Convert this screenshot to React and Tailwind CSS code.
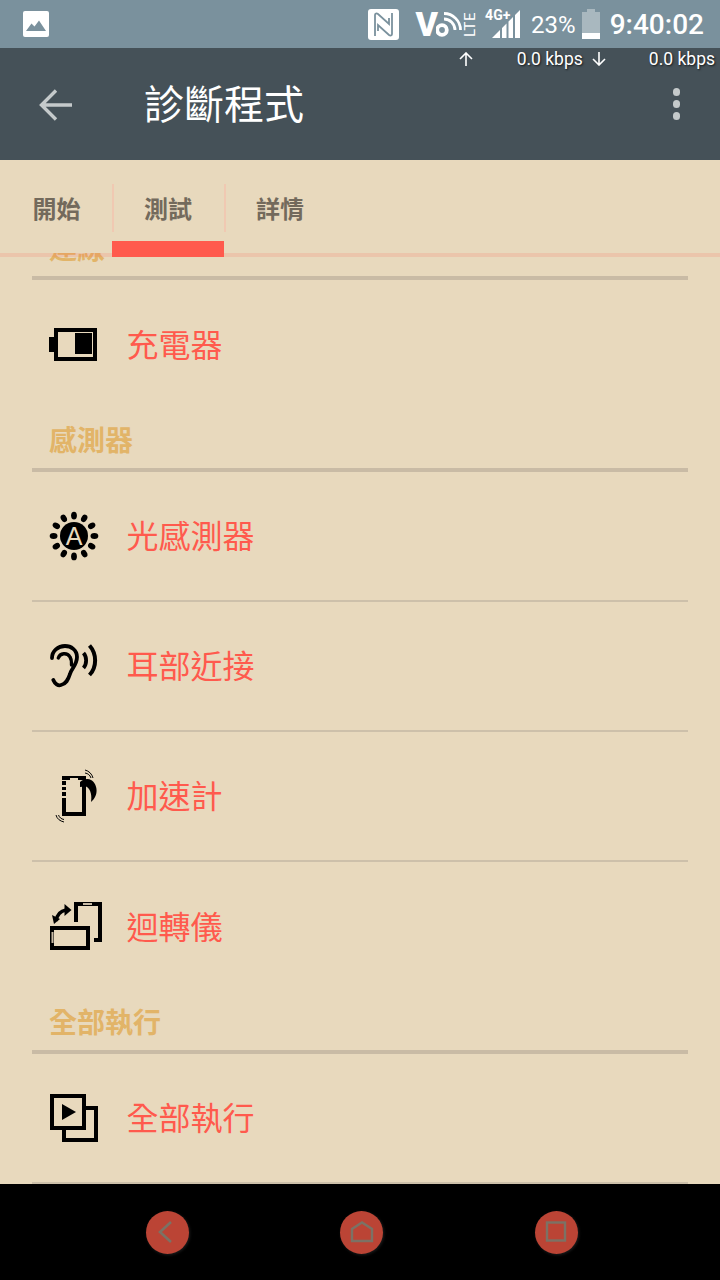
const CJK = { fontFamily: '"Noto Sans CJK TC", "Noto Sans", sans-serif' };

function Row({ icon, label, last }) {
  return (
    <div className={`mx-8 h-[130px] flex items-center pl-[18px] ${last ? "" : "border-b-2 border-[#cdc0aa]"}`}>
      <div className="w-[48px] h-[48px] shrink-0">{icon}</div>
      <span className="ml-[28.5px] -mt-[4px] text-[32px] leading-none text-[#ff5a4d]" style={CJK}>{label}</span>
    </div>
  );
}

function Header({ label }) {
  return (
    <div className="mx-8 h-[62px] pl-[17px] border-b-4 border-[#c9bba5] flex items-start">
      <span className="mt-[13px] text-[28px] leading-[32px] font-bold text-[#e2b468]" style={CJK}>{label}</span>
    </div>
  );
}

const BatteryIcon = (
  <svg viewBox="0 0 48 48" className="w-full h-full overflow-visible">
    <rect x="-1" y="16" width="6" height="15" fill="#000" />
    <rect x="6" y="9" width="39" height="29" fill="none" stroke="#000" strokeWidth="4" />
    <rect x="25" y="12" width="17" height="21" fill="#000" />
  </svg>
);

const rays = [0, 30, 60, 90, 120, 150, 180, 210, 240, 270, 300, 330];
const SunIcon = (
  <svg viewBox="0 0 48 48" className="w-full h-full overflow-visible">
    <circle cx="24" cy="24" r="14" fill="#000" />
    {rays.map((r) => (
      <ellipse key={r} cx="24" cy="3.6" rx="2.9" ry="3.9" fill="#000" transform={`rotate(${r} 24 24)`} />
    ))}
    <text x="24" y="33" textAnchor="middle" fontSize="25" fill="#e8d9bd" style={{ fontFamily: '"Liberation Sans", sans-serif' }}>A</text>
  </svg>
);

const EarIcon = (
  <svg viewBox="0 0 48 48" className="w-full h-full overflow-visible" fill="none" stroke="#000" strokeLinecap="round">
    <path d="M3.3 38 C5 42 8 44 11 43 C16 42 18 38 20 32 C21 27 27 23 27 15 C27 8 21 4 15 4 C8 4 2 9 2 16" strokeWidth="3.8" />
    <path d="M8.3 16 C10 11 17 10 20 15 C22 18 21.5 21 21.5 23" strokeWidth="3.4" />
    <path d="M33.5 11 C37 15 37 22 33.5 26" strokeWidth="3.8" strokeLinecap="butt" />
    <path d="M39.5 3.5 C47 12 47 25 39.5 33" strokeWidth="4" strokeLinecap="butt" />
  </svg>
);

const AccelIcon = (
  <svg viewBox="0 0 48 48" className="w-full h-full overflow-visible" fill="none">
    <path d="M12 6 H36" stroke="#000" strokeWidth="4" />
    <path d="M34 14 V42 H14 V29" stroke="#000" strokeWidth="4" />
    <rect x="20" y="6" width="8" height="2" fill="#e8d9bd" />
    <rect x="12" y="9" width="4" height="4" fill="#000" />
    <rect x="12" y="15" width="4" height="3" fill="#000" />
    <rect x="12" y="20" width="4" height="4" fill="#000" />
    <rect x="12" y="26" width="4" height="3" fill="#000" />
    <path d="M30 10 C33 7 38 6 41 8 C48 12 49 24 41 30 C42 24 41 18 37 15 C35 14 32 15 30 15 Z" fill="#000" />
    <path d="M35 -2 C39 -1 42 2 43 6 M35 1 C38 1.5 40 3 41 6" stroke="#000" strokeWidth="1" />
    <path d="M6 43 C7 47 10 49 14 50 M8.5 43 C9.5 45.5 11 47 14 47.5" stroke="#000" strokeWidth="1" />
  </svg>
);

const GyroIcon = (
  <svg viewBox="0 0 48 48" className="w-full h-full overflow-visible -translate-y-px" fill="none">
    <rect x="2" y="26" width="36" height="20" stroke="#000" strokeWidth="4" />
    <path d="M26 20 V2 H50 V38 H44" stroke="#000" strokeWidth="4" />
    <rect x="33" y="1" width="9" height="2" fill="#c9bba5" />
    <rect x="1.5" y="30" width="2" height="11" fill="#c9bba5" />
    <path d="M6 19 C7 13 10 9 16 8" stroke="#000" strokeWidth="3.4" />
    <path d="M14.5 2 L21.5 8 L14.5 14 Z" fill="#000" />
    <path d="M2 13 L10 17 L4 22 Z" fill="#000" />
  </svg>
);

const RunIcon = (
  <svg viewBox="0 0 48 48" className="w-full h-full overflow-visible" fill="none">
    <rect x="2" y="2" width="32" height="32" stroke="#000" strokeWidth="4" />
    <path d="M36 14 H46 V46 H14 V36" stroke="#000" strokeWidth="4" />
    <path d="M12 10 L26 18 L12 26 Z" fill="#000" />
  </svg>
);

function Tab({ label, active, border }) {
  return (
    <div className="relative w-[112px] h-full flex flex-col items-center">
      <div className={`w-full h-[48px] mt-6 flex items-center justify-center ${border ? "border-l-2 border-[#f0c9b2] pr-[2px]" : "pl-px"}`}>
        <span className="text-[24px] leading-none font-bold text-[#736a5c]" style={CJK}>{label}</span>
      </div>
      {active && <div className="absolute left-0 right-0 -bottom-1 h-4 bg-[#ff5a4d]" />}
    </div>
  );
}

function NavButton({ children }) {
  return (
    <div className="w-[43px] h-[43px] rounded-full bg-[#bb4435] flex items-center justify-center shadow-[1px_1px_3px_rgba(60,60,60,0.5)]">
      {children}
    </div>
  );
}

export default function App() {
  return (
    <div className="w-[720px] h-[1280px] flex flex-col overflow-hidden bg-[#e8d9bd]" style={{ fontFamily: 'Roboto, sans-serif' }}>
      {/* status bar */}
      <div className="h-12 shrink-0 bg-[#7a919d] flex items-center pl-[23px] pr-4 text-white">
        <svg viewBox="0 0 26 26" className="w-[26px] h-[26px]">
          <rect width="26" height="26" rx="2" fill="#fff" />
          <path d="M3 20 L8.5 12.5 L11.5 15.5 L16 9.5 L23 20 Z" fill="#7a919d" />
        </svg>
        <div className="flex-1" />
        <svg viewBox="0 0 31 31" className="w-[31px] h-[31px]">
          <rect width="31" height="31" rx="3" fill="#fff" />
          <path d="M7 27 V6 C7 4.5 8.5 4 10 5 L21 15 V9 M24 4 V25 C24 26.5 22.5 27 21 26 L10 16 V22" fill="none" stroke="#7a919d" strokeWidth="1.8" />
        </svg>
        <span className="ml-[17px] text-[34px] leading-none font-black">V</span>
        <svg viewBox="0 0 26 30" className="w-[26px] h-[30px] -ml-[2px] mt-[2px]">
          <circle cx="6" cy="20" r="4.8" fill="none" stroke="#fff" strokeWidth="3.8" />
          <path d="M8 9 C14 9 19 14 19 20 M8 3.5 C17 3.5 24.5 11 24.5 20" fill="none" stroke="#fff" strokeWidth="2.8" />
        </svg>
        <span className="w-3 ml-[2px] flex items-center justify-center">
          <span className="-rotate-90 text-[15px] leading-none tracking-[0.5px] whitespace-nowrap">LTE</span>
        </span>
        <div className="relative ml-[9px] w-[35px] h-[30px]">
          <svg viewBox="0 0 28 28" className="absolute left-[7px] top-[1px] w-[28px] h-[28px]">
            <path d="M0 28 L8 20 V28 Z M10 18 L14.5 13.5 V28 H10 Z M16.5 11.5 L21 7 V28 H16.5 Z M23 5 L28 0 V28 H23 Z" fill="#fff" />
          </svg>
          <span className="absolute left-0 -top-[2px] text-[14px] leading-[16px] font-bold whitespace-nowrap">4G+</span>
        </div>
        <span className="ml-[11px] mt-[2px] text-[24px] leading-none">23%</span>
        <div className="ml-[6px] w-[18px] h-[30px] flex flex-col items-center">
          <div className="w-[8px] h-[3px] bg-[#a9b8bf]" />
          <div className="w-full flex-1 bg-[#a9b8bf] flex items-end">
            <div className="w-full h-[6px] bg-white" />
          </div>
        </div>
        <span className="ml-[10px] mt-[2px] text-[28px] leading-none font-medium whitespace-nowrap">9:40:02</span>
      </div>

      {/* toolbar */}
      <div className="relative h-[112px] shrink-0 bg-[#455158] flex items-center pl-[39px] pr-[40px]">
        <svg viewBox="0 0 33 32" className="w-[33px] h-[32px] mt-[1px]" fill="none" stroke="#c5cacb" strokeWidth="3.4">
          <path d="M33 16 H3 M17 1.5 L2.5 16 L17 30.5" />
        </svg>
        <span className="ml-[72px] -mt-1 text-[40px] leading-none text-white" style={CJK}>診斷程式</span>
        <div className="ml-auto flex flex-col gap-[4.6px]">
          <div className="w-[7.4px] h-[7.4px] rounded-full bg-[#c5cacb]" />
          <div className="w-[7.4px] h-[7.4px] rounded-full bg-[#c5cacb]" />
          <div className="w-[7.4px] h-[7.4px] rounded-full bg-[#c5cacb]" />
        </div>
        <div className="absolute top-0 left-0 right-0 h-[22px] text-[17.5px] leading-[22px] text-white [text-shadow:1px_1px_2px_rgba(0,0,0,0.7)]">
          <div className="flex justify-end pr-[5px] items-center h-full">
            <svg viewBox="0 0 14 14" className="w-[14px] h-[14px] mr-[44px]" fill="none" stroke="#fff" strokeWidth="1.6"><path d="M7 14 V1 M1 7 L7 1 L13 7" /></svg>
            <span>0.0 kbps</span>
            <svg viewBox="0 0 14 14" className="w-[14px] h-[14px] ml-[9px] mr-[43px]" fill="none" stroke="#fff" strokeWidth="1.6"><path d="M7 0 V13 M1 7 L7 13 L13 7" /></svg>
            <span>0.0 kbps</span>
          </div>
        </div>
      </div>

      {/* tabs */}
      <div className="relative z-10 h-[97px] shrink-0 bg-[#e8d9bd] bg-clip-padding border-b-4 border-[#ff5a4d]/15 flex">
        <Tab label="開始" />
        <Tab label="測試" active border />
        <Tab label="詳情" border />
      </div>

      {/* list */}
      <div className="flex-1 min-h-0 overflow-hidden -mt-1">
        <div className="-mt-[35px]">
          <Header label="連線" />
          <Row icon={BatteryIcon} label="充電器" last />
          <Header label="感測器" />
          <Row icon={SunIcon} label="光感測器" />
          <Row icon={EarIcon} label="耳部近接" />
          <Row icon={AccelIcon} label="加速計" />
          <Row icon={GyroIcon} label="迴轉儀" last />
          <Header label="全部執行" />
          <Row icon={RunIcon} label="全部執行" />
        </div>
      </div>

      {/* nav */}
      <div className="h-[96px] shrink-0 bg-black flex items-center justify-center gap-[151.5px] pl-[3px]">
        <NavButton>
          <svg viewBox="0 0 24 24" className="w-6 h-6" fill="none" stroke="#7b7265" strokeWidth="2.6"><path d="M16 2 L5 12 L16 22" /></svg>
        </NavButton>
        <NavButton>
          <svg viewBox="0 0 24 24" className="w-6 h-6" fill="none" stroke="#7b7265" strokeWidth="2.4"><path d="M2 21 H22 V9 L12 2.5 L2 9 Z" /></svg>
        </NavButton>
        <NavButton>
          <svg viewBox="0 0 24 24" className="w-6 h-6" fill="none" stroke="#7b7265" strokeWidth="2.4"><rect x="3" y="2.5" width="18" height="18" /></svg>
        </NavButton>
      </div>
    </div>
  );
}
